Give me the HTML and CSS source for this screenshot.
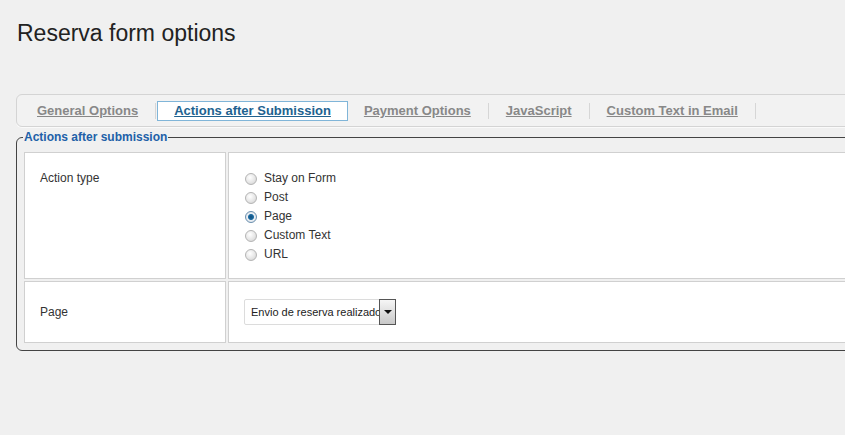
FILE: index.html
```html
<!DOCTYPE html>
<html>
<head>
  <meta charset="utf-8">
  <title>Reserva form options</title>
  <link rel="stylesheet" href="styles.css">
</head>
<body>
  <h1 class="page-title">Reserva form options</h1>

  <div class="tabs">
    <ul>
      <li><a href="#">General Options</a></li>
      <li class="active"><a href="#">Actions after Submission</a></li>
      <li><a href="#">Payment Options</a></li>
      <li><a href="#">JavaScript</a></li>
      <li><a href="#">Custom Text in Email</a></li>
    </ul>
  </div>

  <fieldset class="box">
    <legend>Actions after submission</legend>
    <table class="opts">
      <tr>
        <td class="label top">Action type</td>
        <td class="field top">
          <div class="radio"><span class="dot"></span>Stay on Form</div>
          <div class="radio"><span class="dot"></span>Post</div>
          <div class="radio"><span class="dot on"></span>Page</div>
          <div class="radio"><span class="dot"></span>Custom Text</div>
          <div class="radio"><span class="dot"></span>URL</div>
        </td>
      </tr>
      <tr>
        <td class="label mid">Page</td>
        <td class="field mid">
          <div class="select">
            <span class="select-text">Envio de reserva realizado</span>
            <span class="select-btn"><span class="tri"></span></span>
          </div>
        </td>
      </tr>
    </table>
  </fieldset>
</body>
</html>
```

FILE: styles.css
```css
/* page */
html, body {
  overflow: hidden;
}
body {
  margin: 8px;
  background-color: #f0f0f0;
  font-family: "Liberation Sans", Arial, sans-serif;
  color: #333;
  width: 1000px;
}
.page-title {
  margin: 10px 0 0 9px;
  font-size: 23px;
  font-weight: normal;
  line-height: 30px;
  color: #222;
}

/* tabs */
.tabs {
  margin-top: 46px;
  margin-left: 8px;
  height: 31px;
  border: 1px solid #d4d4d4;
  border-radius: 6px;
  background-color: #f2f2f2;
  box-shadow: 0 1px 0 #fafafa;
}
.tabs ul {
  list-style: none;
  margin: 0;
  padding: 6px 0 0 4px;
  display: flex;
}
.tabs li {
  padding: 0 17px 0 16px;
  border-right: 1px solid #d6d6d6;
  height: 16px;
  margin-top: 2px;
}
.tabs li + li + li + li {
  padding-left: 17px;
}
.tabs li a {
  display: block;
  font-size: 13px;
  font-weight: bold;
  color: #888;
  line-height: 16px;
}
.tabs li.active {
  padding: 0;
  margin: 0 0 0 1px;
  height: auto;
  border-right: none;
}
.tabs li.active a {
  padding: 1px 16px;
  border: 1px solid #80b5d8;
  background-color: #fff;
  color: #21628f;
}

/* fieldset */
.box {
  margin: 3px 0 0 8px;
  padding: 6px 7px 5px 7px;
  border: 1px solid #444;
  border-radius: 6px;
}
.box legend {
  padding: 0 1px;
  margin-left: -1px;
  font-size: 12px;
  font-weight: bold;
  color: #2160a8;
}
.opts {
  border-spacing: 2px;
  margin: 0 -2px;
  width: 900px;
}
.opts td {
  background-color: #fff;
  border: 1px solid #d0d0d0;
  font-size: 12px;
  color: #333;
  line-height: 19px;
}
.opts td.label {
  width: 184px;
  padding-left: 15px;
}
.opts td.field {
  padding-left: 15px;
}
.opts td.top {
  vertical-align: top;
  padding-top: 16px;
  padding-bottom: 14px;
}
.opts td.mid {
  vertical-align: middle;
  height: 60px;
  padding-top: 0;
  padding-bottom: 0;
}

/* radios */
.radio {
  display: flex;
  align-items: center;
  height: 19px;
}
.dot {
  width: 12px;
  height: 12px;
  margin: 0 7px 0 1px;
  border: 1px solid #b4b4b4;
  border-radius: 50%;
  box-sizing: border-box;
  background: radial-gradient(circle at 40% 35%, #fff 0, #e4e4e4 60%, #cbcbcb 100%);
}
.dot.on {
  border-color: #6a8fae;
  background: radial-gradient(circle, #0e4f7e 0, #1b6aa1 2.5px, #e9eef3 3.5px, #d6dde4 100%);
}

/* select */
.select {
  display: inline-flex;
  width: 152px;
  height: 26px;
  border: 1px solid #dcdcdc;
  border-radius: 2px;
  box-sizing: border-box;
  background-color: #fff;
  vertical-align: middle;
}
.select-text {
  flex: 1;
  overflow: hidden;
  white-space: nowrap;
  font-size: 11px;
  line-height: 24px;
  padding-left: 6px;
  color: #222;
}
.select-btn {
  width: 17px;
  margin: -1px -1px -1px 0;
  border: 1px solid #555;
  box-sizing: border-box;
  background: linear-gradient(#f6f6f6, #c8c8c8);
  display: flex;
  align-items: center;
  justify-content: center;
}
.tri {
  width: 0;
  height: 0;
  border-left: 4px solid transparent;
  border-right: 4px solid transparent;
  border-top: 4px solid #111;
}
```
